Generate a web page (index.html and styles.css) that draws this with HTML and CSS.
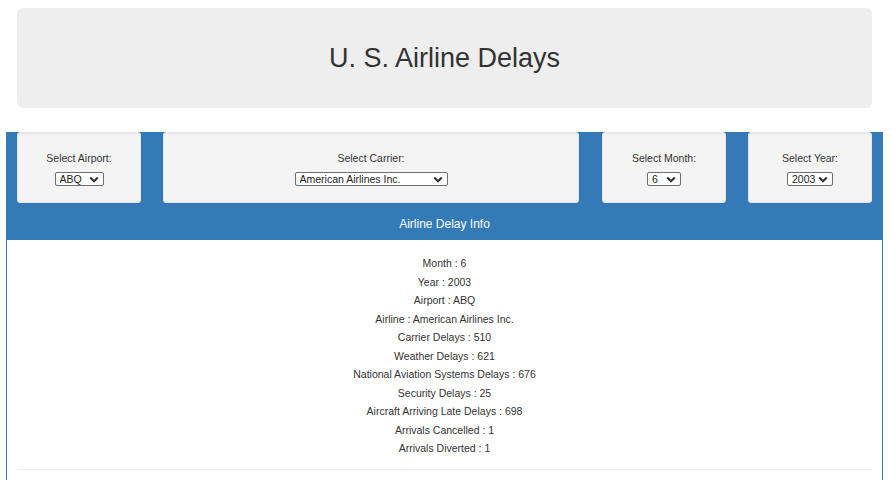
FILE: index.html
```html
<!DOCTYPE html>
<html>
<head>
<meta charset="utf-8">
<title>U. S. Airline Delays</title>
<link rel="stylesheet" href="styles.css">
</head>
<body>
<div class="page">
  <div class="jumbo"><h1 class="title">U. S. Airline Delays</h1></div>
  <div class="panel">
    <div class="controls">
      <div class="well w-small">
        <div class="lbl">Select Airport:</div>
        <select class="sel sel-airport"><option>ABQ</option></select>
      </div>
      <div class="well w-wide">
        <div class="lbl">Select Carrier:</div>
        <select class="sel sel-carrier"><option>American Airlines Inc.</option></select>
      </div>
      <div class="well w-small">
        <div class="lbl">Select Month:</div>
        <select class="sel sel-month"><option>6</option></select>
      </div>
      <div class="well w-small">
        <div class="lbl">Select Year:</div>
        <select class="sel sel-year"><option>2003</option></select>
      </div>
    </div>
    <div class="panel-heading">Airline Delay Info</div>
    <div class="panel-body">
      <div class="info">
        <div>Month : 6</div>
        <div>Year : 2003</div>
        <div>Airport : ABQ</div>
        <div>Airline : American Airlines Inc.</div>
        <div>Carrier Delays : 510</div>
        <div>Weather Delays : 621</div>
        <div>National Aviation Systems Delays : 676</div>
        <div>Security Delays : 25</div>
        <div>Aircraft Arriving Late Delays : 698</div>
        <div>Arrivals Cancelled : 1</div>
        <div>Arrivals Diverted : 1</div>
      </div>
      <hr class="rule">
    </div>
  </div>
</div>
</body>
</html>
```
FILE: styles.css
```css
* { box-sizing: border-box; }
html, body { margin: 0; padding: 0; background: #fff; }
body {
  font-family: "Liberation Sans", Arial, sans-serif;
  color: #333;
  font-size: 10.5px;
}
.page { padding-top: 8px; }
.jumbo {
  margin-left: 17px;
  width: 855px;
  height: 100px;
  background: #eeeeee;
  border-radius: 6px;
  display: flex;
  align-items: center;
  justify-content: center;
}
.title {
  margin: 0;
  font-weight: 400;
  font-size: 27px;
  line-height: 31px;
  color: #333;
  padding-top: 1px;
}
.panel {
  margin-top: 24px;
  margin-left: 6px;
  width: 877px;
  border-left: 1px solid #337ab7;
  border-right: 1px solid #337ab7;
  height: 360px;
}
.controls {
  background: #337ab7;
  display: flex;
  justify-content: flex-start;
  gap: 22px;
  padding: 0 9px 0 10px;
}
.well {
  height: 71px;
  background: #f4f4f4;
  border: 1px solid #e6e6e6;
  border-radius: 3px;
  box-shadow: inset 0 1px 1px rgba(0,0,0,.05);
  padding-top: 18px;
  display: flex;
  flex-direction: column;
  align-items: center;
}
.w-small { width: 124px; }
.w-wide { width: 416px; margin-right: 1px; }
.lbl {
  font-size: 10.5px;
  line-height: 15px;
  margin-bottom: 6px;
  color: #333;
}
.sel {
  -webkit-appearance: none;
  appearance: none;
  height: 14px;
  margin: 0;
  padding: 0 0 0 4px;
  font-family: "Liberation Sans", Arial, sans-serif;
  font-size: 10.5px;
  line-height: 12px;
  color: #222;
  border: 1px solid #6e6e6e;
  border-radius: 2px;
  background-color: #fff;
  background-image: url("data:image/svg+xml,%3Csvg xmlns='http://www.w3.org/2000/svg' width='10' height='7' viewBox='0 0 10 7'%3E%3Cpath d='M1.2 1.4 L5 5.2 L8.8 1.4' fill='none' stroke='%23333' stroke-width='2.1'/%3E%3C/svg%3E");
  background-repeat: no-repeat;
  background-position: right 4px center;
  background-size: 10px 7px;
}
.sel-airport { width: 49px; }
.sel-carrier { width: 153px; }
.sel-month { width: 34px; }
.sel-year { width: 46px; }
.panel-heading {
  background: #337ab7;
  color: #fff;
  height: 37px;
  font-size: 12px;
  line-height: 17px;
  padding-top: 13px;
  text-align: center;
}
.panel-body {
  background: #fff;
  padding: 14px 10px 0 10px;
}
.info {
  text-align: center;
  line-height: 18.5px;
  font-size: 10.5px;
  color: #333;
}
.rule {
  margin: 11px 0 0 0;
  border: 0;
  border-top: 1px solid #eeeeee;
  height: 0;
}
```
